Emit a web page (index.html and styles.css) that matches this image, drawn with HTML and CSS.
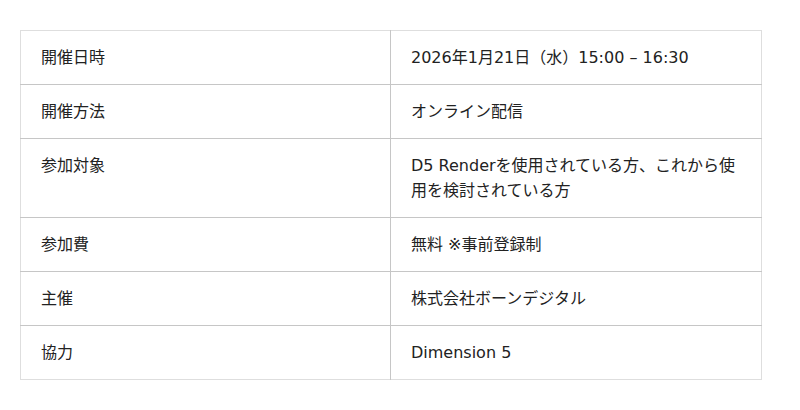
FILE: index.html
```html
<!DOCTYPE html>
<html lang="ja">
<head>
<meta charset="utf-8">
<link rel="stylesheet" href="styles.css">
</head>
<body>
<table class="info">
  <colgroup><col class="col-label"><col class="col-value"></colgroup>
  <tr><td class="label">開催日時</td><td class="value">2026年1月21日（水）15:00 – 16:30</td></tr>
  <tr><td class="label">開催方法</td><td class="value">オンライン配信</td></tr>
  <tr><td class="label">参加対象</td><td class="value">D5 Renderを使用されている方、これから使用を検討されている方</td></tr>
  <tr><td class="label">参加費</td><td class="value">無料 ※事前登録制</td></tr>
  <tr><td class="label">主催</td><td class="value">株式会社ボーンデジタル</td></tr>
  <tr><td class="label">協力</td><td class="value">Dimension 5</td></tr>
</table>
</body>
</html>
```
FILE: styles.css
```css
html, body {
  margin: 0;
  padding: 0;
  background: #ffffff;
}
body {
  padding: 30px 20px;
  font-family: "DejaVu Sans", "Noto Sans CJK JP", sans-serif;
  font-size: 16px;
  color: #222222;
}
.info {
  width: 742px;
  border-collapse: collapse;
  border: 1px solid #dedede;
  table-layout: fixed;
}
.col-label {
  width: 370px;
}
.info td {
  padding: 14px 20px;
  line-height: 25px;
  vertical-align: top;
  border-bottom: 1px solid #c6c6c6;
}
.info tr:last-child td {
  border-bottom: none;
}
.info td.label {
  border-right: 1px solid #c6c6c6;
}
```
